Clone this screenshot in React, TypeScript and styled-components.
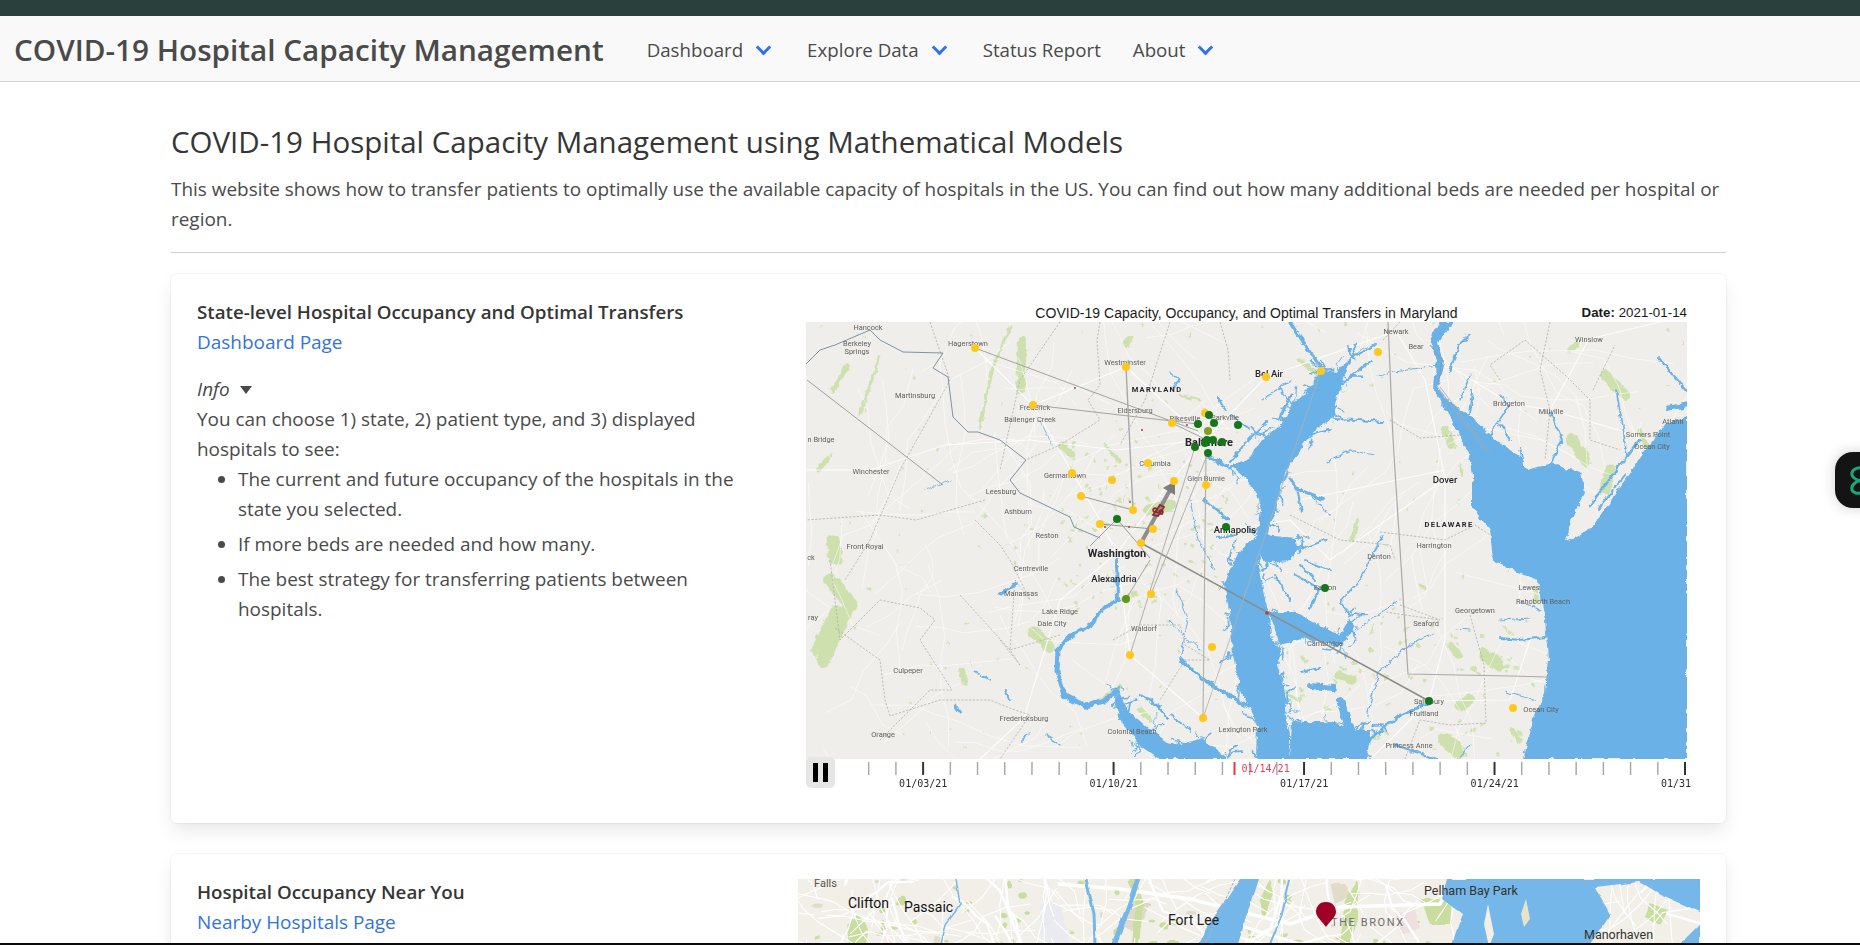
import React from "react";
import styled, { createGlobalStyle } from "styled-components";

/* ---------- deterministic map helpers ---------- */
const makeRng = (seed: number) => () => {
  seed = (seed * 1664525 + 1013904223) % 4294967296;
  return seed / 4294967296;
};

type Stroke = [string, number];

const randomRoads = (seed: number, count: number, x0: number, y0: number, w: number, h: number, step: number) => {
  const r = makeRng(seed);
  const out: string[] = [];
  for (let i = 0; i < count; i++) {
    let x = x0 + r() * w;
    let y = y0 + r() * h;
    let a = r() * Math.PI * 2;
    let d = `M${x.toFixed(1)},${y.toFixed(1)}`;
    const n = 3 + Math.floor(r() * 5);
    for (let j = 0; j < n; j++) {
      a += (r() - 0.5) * 0.9;
      x += Math.cos(a) * step * (0.6 + r());
      y += Math.sin(a) * step * (0.6 + r());
      d += `L${x.toFixed(1)},${y.toFixed(1)}`;
    }
    out.push(d);
  }
  return out;
};

const randomPatches = (seed: number, count: number, x0: number, y0: number, w: number, h: number, size: number) => {
  const r = makeRng(seed);
  const out: { x: number; y: number; rx: number; ry: number; rot: number }[] = [];
  for (let i = 0; i < count; i++) {
    out.push({
      x: x0 + r() * w,
      y: y0 + r() * h,
      rx: size * (0.4 + r()),
      ry: size * (0.3 + r() * 0.6),
      rot: r() * 180,
    });
  }
  return out;
};

/* ---------- Maryland map data, in page coordinates ---------- */
const BAY_POLYGONS = [
  // Delaware Bay and the Atlantic
  "M1440,322 L1430,340 L1436,360 L1434,390 L1455,427 L1469,453 L1472,477 L1472,507 L1490,530 L1493,560 L1520,573 L1538,580 L1545,620 L1548,660 L1545,693 L1533,720 L1522,759 L1687,759 L1687,417 L1666,423 L1643,453 L1620,487 L1593,527 L1566,542 L1572,517 L1585,493 L1581,473 L1551,463 L1528,470 L1520,457 L1490,435 L1469,415 L1447,400 L1438,388 L1444,360 L1438,343 L1447,330 L1453,322 Z",
  // Chesapeake Bay
  "M1322,369 L1313,385 L1300,398 L1293,402 L1285,420 L1262,440 L1250,459 L1232,466 L1247,479 L1255,490 L1261,509 L1258,535 L1240,550 L1233,562 L1224,585 L1230,615 L1233,655 L1240,689 L1257,722 L1256,759 L1290,759 L1290,735 L1284,712 L1286,700 L1283,685 L1277,665 L1280,650 L1272,640 L1268,612 L1262,585 L1257,562 L1265,545 L1270,525 L1276,510 L1278,495 L1282,482 L1287,469 L1310,435 L1335,415 L1335,405 L1343,379 L1353,357 L1335,372 Z",
  // Eastern Bay / Miles River
  "M1263,535 L1297,538 L1298,550 L1290,560 L1270,562 L1260,558 Z",
  // Choptank mouth
  "M1268,612 L1296,612 L1325,628 L1340,636 L1350,618 L1354,628 L1340,646 L1305,638 L1280,645 Z",
  // Lower Potomac
  "M1118,690 L1128,710 L1150,730 L1168,742 L1180,745 L1202,738 L1225,757 L1225,759 L1160,759 L1140,745 L1122,722 L1115,705 Z",
  // Tangier Sound
  "M1292,722 L1330,722 L1358,730 L1372,730 L1366,759 L1290,759 Z",
];

/* Small creeks that branch off the shores of the Chesapeake and its rivers */
const coastCreeks = (seed: number): Stroke[] => {
  const r = makeRng(seed);
  const out: Stroke[] = [];
  BAY_POLYGONS.forEach((poly, index) => {
    if (index === 0) return;
    const pts = (poly.match(/\d+,\d+/g) || []).map((p) => p.split(",").map(Number));
    pts.forEach(([x, y]) => {
      for (let k = 0; k < 3; k++) {
        const a = r() * Math.PI * 2;
        const len = 6 + r() * 12;
        const bx = x + (r() - 0.5) * 8;
        const by = y + (r() - 0.5) * 8;
        const mx = bx + Math.cos(a) * len * 0.5;
        const my = by + Math.sin(a) * len * 0.5;
        const ex = mx + Math.cos(a + 0.7) * len * 0.5;
        const ey = my + Math.sin(a + 0.7) * len * 0.5;
        out.push([`M${bx.toFixed(1)},${by.toFixed(1)} L${mx.toFixed(1)},${my.toFixed(1)} L${ex.toFixed(1)},${ey.toFixed(1)}`, 0.8 + r() * 1.1]);
      }
    });
  });
  return out;
};

const RIVERS: Stroke[] = [
  ...coastCreeks(17),
  ["M1117,560 L1118,600", 4],
  ["M1118,600 L1100,610 L1093,623 L1070,637", 4],
  ["M1070,637 L1058,650 L1057,672 L1064,695 L1085,706 L1102,702 L1116,692", 5],
  ["M1353,357 L1375,345", 2],
  ["M1377,375 L1437,365", 1.1],
  ["M1322,369 L1305,345 L1290,322", 3],
  ["M1340,385 L1372,360", 2],
  ["M1228,466 L1208,456", 3.5],
  ["M1228,520 L1205,500", 2.5],
  ["M1236,534 L1218,538", 2],
  ["M1180,659 L1203,679 L1223,692 L1257,712", 3.5],
  ["M1180,659 L1188,620 L1176,590", 1],
  ["M1140,695 L1160,706", 2.5],
  ["M1168,718 L1152,700", 2.5],
  ["M1190,730 L1170,715", 2],
  ["M1323,499 L1297,489 L1290,478", 3],
  ["M1297,489 L1302,512", 2],
  ["M1310,495 L1330,515", 1.2],
  ["M1327,462 L1350,450 L1373,455", 1.2],
  ["M1333,419 L1358,420 L1383,422", 2],
  ["M1330,430 L1310,435", 2],
  ["M1230,462 L1248,440 L1267,422", 2],
  ["M1280,418 L1290,395", 3],
  ["M1250,430 L1230,415", 2],
  ["M1262,400 L1290,380", 1.2],
  ["M1350,615 L1340,602 L1360,579 L1383,535", 1.6],
  ["M1356,630 L1378,615 L1400,600", 1],
  ["M1296,575 L1320,590 L1310,610", 2.5],
  ["M1290,600 L1275,575", 2],
  ["M1300,565 L1315,580", 2],
  ["M1325,540 L1300,550", 2],
  ["M1330,570 L1305,560", 2],
  ["M1260,590 L1262,600", 1.5],
  ["M1433,633 L1407,647 L1380,670 L1373,693 L1367,716", 1.2],
  ["M1429,703 L1400,715 L1370,740", 2.5],
  ["M1310,686 L1334,688", 6],
  ["M1340,700 L1350,730", 8],
  ["M1300,672 L1320,668", 2],
  ["M1395,745 L1440,760", 2],
  ["M1460,759 L1470,745", 1.2],
  ["M1546,637 L1520,640 L1500,638", 2],
  ["M1500,620 L1530,618", 1.2],
  ["M1540,610 L1520,600", 1.2],
  ["M1536,700 L1505,692", 1.2],
  ["M1456,628 L1470,630", 1],
  ["M1450,372 L1458,345 L1470,335", 2],
  ["M1460,400 L1470,376", 1.2],
  ["M1469,415 L1472,390", 2],
  ["M1490,435 L1510,405 L1500,395", 1.6],
  ["M1524,470 L1520,448", 2],
  ["M1551,463 L1562,440 L1551,413", 2],
  ["M1510,440 L1500,425", 2],
  ["M1627,456 L1622,420 L1616,390", 1.6],
  ["M1687,391 L1658,357", 2],
  ["M1687,405 L1668,408", 5],
  ["M1590,505 L1640,440", 2.5],
  ["M1598,510 L1625,475", 2],
  ["M1190,500 L1198,540 L1215,570", 1],
  ["M1168,620 L1200,650", 1],
  ["M1040,420 L1052,445", 0.8],
  ["M925,490 L950,480", 0.8],
  ["M1170,372 L1180,380 L1172,388", 1.4],
  ["M1218,396 L1225,410", 2],
  ["M1005,690 L1010,700", 2],
  ["M1045,735 L1060,745", 1.5],
  ["M1020,742 L1030,732", 1.5],
  ["M955,705 L960,712", 3],
  ["M975,672 L990,680", 1.5],
  ["M1015,584 L1000,594", 3],
];

const POTOMAC_BORDER = "M806,364 L820,350 L835,345 L870,330 L880,340 L903,352 L943,353 L933,368 L948,377 L953,417 L968,432 L978,432 L1000,440 L1026,460 L1010,480 L1020,493 L1070,517 L1074,527 L1100,538";

const GREEN_STRIPS: Stroke[] = [
  ["M1010,327 L993,367 L980,427", 3],
  ["M1022,340 L1020,390", 8],
  ["M847,367 L833,390", 5],
  ["M880,357 L860,413", 3],
  ["M830,580 L850,603 L823,660", 14],
  ["M836,610 L815,650", 10],
  ["M1033,632 L1050,647", 11],
  ["M962,670 L964,682", 6],
  ["M833,540 L836,560", 13],
  ["M828,458 L818,470", 5],
  ["M1060,445 L1072,453", 7],
  ["M1105,445 L1120,462", 3],
  ["M1130,338 L1126,345", 6],
  ["M1148,510 L1170,505", 11],
  ["M1180,395 L1200,400", 3],
  ["M1420,585 L1425,590", 3],
  ["M1358,520 L1352,540", 4],
  ["M1445,430 L1452,445", 8],
  ["M1460,465 L1462,475", 3],
  ["M1572,440 L1585,460", 12],
  ["M1605,375 L1625,395", 10],
  ["M1610,470 L1605,490", 11],
  ["M1640,430 L1650,455", 5],
  ["M1535,590 L1537,600", 5],
  ["M1325,380 L1300,360", 5],
  ["M1450,645 L1458,655", 7],
  ["M1485,655 L1498,665", 13],
  ["M1340,675 L1352,680", 9],
  ["M1460,705 L1470,700", 11],
  ["M1445,740 L1460,752", 14],
  ["M1347,722 L1354,737", 8],
  ["M1280,690 L1300,700", 4],
  ["M1123,600 L1135,594", 5],
  ["M1140,710 L1150,720", 5],
  ["M1120,687 L1100,700", 5],
  ["M1512,730 L1520,740", 5],
  ["M1570,350 L1576,345", 7],
];

const MD_ROADS = [
  ...randomRoads(11, 150, 806, 322, 881, 437, 26),
  "M806,470 L870,470 L945,445 L1030,440 L1117,450 L1200,440",
  "M975,348 L1033,405 L1100,520 L1117,553",
  "M1033,405 L1126,367 L1205,440",
  "M1117,553 L1160,495 L1205,440 L1266,377 L1396,331",
  "M1117,553 L1130,655 L1203,718",
  "M1117,553 L1060,600 L1024,718 L980,759",
  "M1429,701 L1445,640 L1445,479 L1425,380 L1396,331",
  "M1429,701 L1510,700 L1530,640",
  "M1445,479 L1330,560 L1290,520",
  "M1300,500 L1445,470",
  "M1550,410 L1509,403 L1440,360",
  "M1550,410 L1589,339 L1660,322",
  "M1550,410 L1652,440",
  "M1429,701 L1390,740 L1370,759",
  "M1235,529 L1290,520",
];

const COUNTY_LINES = [
  "M930,322 L950,380 L900,470 L870,540 L845,580",
  "M1060,322 L1020,380 L1000,470",
  "M1100,322 L1097,340 L1100,385 L1088,400 L1100,420 L1060,445 L1026,460",
  "M1170,322 L1145,400 L1120,445",
  "M1220,322 L1228,350 L1230,380",
  "M985,500 L916,520 L880,515 L806,520",
  "M975,520 L1000,545 L1010,560 L1030,600 L1015,580 L1010,650 L1060,635",
  "M960,595 L1010,650 L1020,665",
  "M830,560 L840,640 L880,600 L920,608 L935,620 L920,640 L952,690 L930,690 L880,740",
  "M835,628 L880,660 L885,700 L890,716 L940,700 L990,700 L1015,710 L1030,715 L1000,759",
  "M1020,665 L1000,640",
  "M1113,640 L1140,625 L1180,625 L1185,645 L1210,660 L1185,660 L1160,700",
  "M1380,532 L1445,540 L1475,525 L1490,535",
  "M1390,420 L1420,438 L1460,435",
  "M1500,380 L1490,365 L1525,340 L1565,375 L1590,400 L1590,440 L1620,450",
  "M1550,322 L1540,370 L1550,410 L1545,460",
  "M1593,390 L1615,345",
  "M1400,605 L1440,620 L1385,612",
  "M1383,340 L1400,322",
  "M1470,615 L1484,665 L1486,723 L1450,725 L1420,720 L1405,759",
  "M1290,515 L1340,540 L1390,545 L1395,560",
];

type Kind = "minor" | "city" | "big" | "state";
const MD_LABELS: [string, number, number, Kind][] = [
  ["Hancock", 868, 327, "minor"], ["Berkeley", 857, 343, "minor"], ["Springs", 857, 351, "minor"],
  ["Hagerstown", 968, 343, "minor"], ["Westminster", 1125, 362, "minor"], ["MARYLAND", 1157, 389, "state"],
  ["Bel Air", 1269, 373, "city"], ["Martinsburg", 915, 395, "minor"], ["Frederick", 1035, 407, "minor"],
  ["Ballenger Creek", 1030, 419, "minor"], ["Eldersburg", 1135, 410, "minor"], ["Pikesville", 1185, 418, "minor"],
  ["Parkville", 1225, 417, "minor"], ["n Bridge", 821, 439, "minor"], ["Baltimore", 1209, 442, "big"],
  ["Columbia", 1155, 463, "minor"], ["Germantown", 1065, 475, "minor"], ["Glen Burnie", 1206, 478, "minor"],
  ["Winchester", 871, 471, "minor"], ["Leesburg", 1001, 491, "minor"], ["Ashburn", 1018, 511, "minor"],
  ["Annapolis", 1235, 529, "city"], ["Reston", 1047, 535, "minor"], ["Front Royal", 865, 546, "minor"],
  ["Washington", 1117, 553, "big"], ["Centreville", 1031, 568, "minor"], ["ck", 811, 557, "minor"],
  ["Alexandria", 1114, 578, "city"], ["Manassas", 1021, 593, "minor"], ["Lake Ridge", 1060, 611, "minor"],
  ["Dale City", 1052, 623, "minor"], ["Waldorf", 1144, 628, "minor"], ["ray", 813, 617, "minor"],
  ["Culpeper", 908, 670, "minor"], ["Fredericksburg", 1024, 718, "minor"], ["Orange", 883, 734, "minor"],
  ["Colonial Beach", 1132, 731, "minor"], ["Lexington Park", 1243, 729, "minor"], ["Newark", 1396, 331, "minor"],
  ["Bear", 1416, 346, "minor"], ["Winslow", 1589, 339, "minor"], ["Bridgeton", 1509, 403, "minor"],
  ["Millville", 1551, 411, "minor"], ["Atlanti", 1673, 421, "minor"], ["Somers Point", 1648, 434, "minor"],
  ["Ocean City", 1652, 446, "minor"], ["Dover", 1445, 479, "city"], ["DELAWARE", 1449, 524, "state"],
  ["Harrington", 1434, 545, "minor"], ["Denton", 1379, 556, "minor"], ["Easton", 1325, 587, "minor"],
  ["Lewes", 1529, 587, "minor"], ["Rehoboth Beach", 1543, 601, "minor"], ["Georgetown", 1475, 610, "minor"],
  ["Seaford", 1426, 623, "minor"], ["Cambridge", 1325, 643, "minor"], ["Salisbury", 1429, 701, "minor"],
  ["Fruitland", 1424, 713, "minor"], ["Ocean City", 1541, 709, "minor"], ["Princess Anne", 1409, 745, "minor"],
];

const YELLOW = "#fdc81e";
const GREEN = "#14761a";
const HOSPITALS: [number, number, string][] = [
  [975, 348, YELLOW], [1126, 367, YELLOW], [1266, 377, YELLOW], [1033, 405, YELLOW], [1172, 423, YELLOW],
  [1205, 413, YELLOW], [1148, 463, YELLOW], [1072, 473, YELLOW], [1112, 480, YELLOW], [1174, 481, YELLOW],
  [1206, 485, YELLOW], [1081, 496, YELLOW], [1133, 510, YELLOW], [1100, 524, YELLOW], [1153, 529, YELLOW],
  [1141, 543, YELLOW], [1151, 594, YELLOW], [1130, 655, YELLOW], [1212, 647, YELLOW], [1203, 718, YELLOW],
  [1378, 352, YELLOW], [1321, 371, YELLOW], [1513, 708, YELLOW],
  [1209, 415, GREEN], [1198, 424, GREEN], [1214, 423, GREEN], [1238, 425, GREEN], [1208, 431, "#7f9f24"],
  [1207, 440, GREEN], [1213, 440, GREEN], [1222, 442, GREEN], [1195, 447, GREEN], [1208, 453, GREEN],
  [1205, 443, GREEN], [1117, 519, GREEN], [1226, 527, GREEN], [1126, 599, "#5f9612"], [1325, 588, GREEN], [1429, 701, GREEN],
];

const TRANSFERS: [string, number, string][] = [
  ["M975,348 L1120,402 L1198,431", 0.9, "#9a9a97"],
  ["M1033,405 L1198,424", 0.9, "#9a9a97"],
  ["M1126,367 L1133,510", 1.4, "#a8a8a5"],
  ["M1081,496 L1133,510", 0.9, "#8f8f8c"],
  ["M1100,524 L1153,529", 0.9, "#8f8f8c"],
  ["M1141,543 L1429,701", 1.5, "#8c8c89"],
  ["M1203,718 L1206,453", 1.1, "#afafac"],
  ["M1203,718 L1321,371", 0.8, "#b0b0ad"],
  ["M1130,655 L1195,447", 1, "#afafac"],
  ["M1151,594 L1208,453", 1, "#afafac"],
  ["M1117,519 L1090,546", 0.9, "#9a9a97"],
  ["M1117,519 L1150,558", 0.9, "#9a9a97"],
  ["M1126,599 L1150,560", 0.9, "#9a9a97"],
  ["M1172,423 L1207,440", 0.9, "#9a9a97"],
];

const RED_MARKS: [number, number][] = [[1075, 388], [1142, 430], [1130, 502], [1105, 527], [1129, 527], [1187, 425], [1267, 613]];

/* ---------- timeline data ---------- */
const MINOR_TICKS = Array.from({ length: 31 }, (_, i) => 868.7 + i * 27.21);
const isMajor = (i: number) => (i + 5) % 7 === 0 && i >= 2;
const DATES: [string, number][] = [["01/03/21", 923.2], ["01/10/21", 1113.7], ["01/17/21", 1304.2], ["01/24/21", 1494.7]];

/* ---------- New York map data ---------- */
const NY_ROADS = randomRoads(29, 170, 798, 870, 900, 85, 18);
const NY_PATCHES = randomPatches(41, 70, 798, 880, 800, 65, 4);
const MD_PATCH_GROUPS = [
  randomPatches(3, 170, 806, 322, 881, 437, 1.7),
  randomPatches(5, 110, 1060, 440, 170, 170, 2.2),
  randomPatches(7, 60, 1280, 600, 260, 159, 3),
];

/* ---------- styled parts ---------- */
const GlobalStyle = createGlobalStyle`
  html, body { margin: 0; padding: 0; height: 100%; background: #fff; overflow: hidden; }
  body {
    font-family: "Open Sans", "Noto Sans", sans-serif;
    color: #4a4a4a;
  }
  * { box-sizing: border-box; }
`;

const Screen = styled.div`
  position: relative;
  width: 1860px;
  height: 945px;
  overflow: hidden;
  background: #fff;
`;

const TopStrip = styled.div`
  height: 16px;
  background: #2a403d;
`;

const NavBar = styled.nav`
  display: flex;
  align-items: center;
  height: 66px;
  padding: 2px 0 0 14px;
  gap: 43px;
  background: #f9f9f9;
  border-bottom: 1px solid #d4d4d4;
`;

const Brand = styled.a`
  font-size: 29.7px;
  font-weight: 600;
  color: #4a4a4a;
  white-space: nowrap;
`;

const NavMenu = styled.div`
  display: flex;
  align-items: center;
  gap: 32px;
`;

const NavItem = styled.a`
  display: flex;
  align-items: center;
  gap: 15px;
  font-size: 18.7px;
  color: #4a4a4a;
  white-space: nowrap;
`;

const Chevron = styled.span`
  display: block;
  width: 11px;
  height: 11px;
  margin: -5px 6px 0 0;
  border-left: 3px solid #3273dc;
  border-bottom: 3px solid #3273dc;
  transform: rotate(-45deg);
`;

const Main = styled.main`
  padding: 40px 134px 0 171px;
`;

const Heading = styled.h1`
  margin: 0;
  font-size: 29.5px;
  line-height: 40px;
  font-weight: 500;
  color: #363636;
`;

const Lead = styled.p`
  margin: 12px 0 0;
  font-size: 18.95px;
  line-height: 30.4px;
`;

const Rule = styled.hr`
  margin: 17px 0 21px;
  border: 0;
  height: 1px;
  background: #cfcfcf;
`;

const Card = styled.section`
  display: grid;
  grid-template-columns: 601px 902px;
  padding: 23px 26px 25px;
  margin-bottom: 31px;
  background: #fff;
  border-radius: 6px;
  box-shadow: 0 9px 18px -2px rgba(10, 10, 10, 0.1), 0 0 0 1px rgba(10, 10, 10, 0.03);
`;

const TextColumn = styled.div`
  font-size: 18.95px;
  line-height: 30px;
`;

const CardTitle = styled.div`
  font-weight: 600;
  font-size: 18.75px;
  color: #363636;
`;

const CardLink = styled.a`
  display: block;
  color: #3273dc;
`;

const InfoToggle = styled.div`
  display: flex;
  align-items: center;
  gap: 10px;
  margin-top: 17px;
  font-style: italic;
`;

const Caret = styled.span`
  width: 0;
  height: 0;
  border-left: 6.5px solid transparent;
  border-right: 6.5px solid transparent;
  border-top: 8px solid #4a4a4a;
  margin-top: 3px;
`;

const BulletList = styled.ul`
  margin: 0;
  padding: 0 0 0 41px;
  max-width: 551px;
`;

const Bullet = styled.li`
  & + & {
    margin-top: 5px;
  }
`;

const Figure = styled.figure`
  margin: 4px 0 0 8px;
  width: 881px;
`;

const FigureHead = styled.div`
  display: grid;
  grid-template-columns: 1fr auto 1fr;
  align-items: center;
  height: 21px;
  padding-top: 3px;
  font-family: "Liberation Sans", Arial, sans-serif;
  font-size: 14px;
  letter-spacing: 0.03px;
  color: #1a1a1a;
`;

const FigureDate = styled.div`
  justify-self: end;
  font-size: 13.3px;
  & b {
    font-weight: 700;
  }
`;

const MapCanvas = styled.svg`
  display: block;
  width: 881px;
  height: 437px;
  background: #f0eeea;
`;

const MapLabel = styled.text<{ $kind: Kind }>`
  font-family: Roboto, "Liberation Sans", sans-serif;
  text-anchor: middle;
  dominant-baseline: central;
  font-size: ${(p) => (p.$kind === "big" ? "11px" : p.$kind === "city" ? "9.5px" : p.$kind === "state" ? "7.5px" : "7.4px")};
  font-weight: ${(p) => (p.$kind === "big" || p.$kind === "state" ? 700 : p.$kind === "city" ? 500 : 400)};
  letter-spacing: ${(p) => (p.$kind === "state" ? "1.3px" : "0")};
  fill: ${(p) => (p.$kind === "minor" ? "#5f5f5c" : "#26262a")};
`;

const Timeline = styled.div`
  position: relative;
  height: 39px;
`;

const TimelineAxis = styled.svg`
  display: block;
  width: 887px;
  height: 39px;
  overflow: hidden;
`;

const TickLabel = styled.text<{ $active?: boolean; $start?: boolean }>`
  font-family: "DejaVu Sans Mono", "Liberation Mono", monospace;
  font-size: 10px;
  text-anchor: ${(p) => (p.$active || p.$start ? "start" : "middle")};
  dominant-baseline: central;
  fill: ${(p) => (p.$active ? "#ef3a4c" : "#2b2b2b")};
`;

const PauseButton = styled.button`
  position: absolute;
  left: 0;
  top: -2px;
  display: flex;
  align-items: center;
  justify-content: center;
  gap: 5px;
  width: 29px;
  height: 31px;
  padding: 0;
  border: 0;
  border-radius: 5px;
  background: #e6e6e6;
`;

const PauseBar = styled.span`
  width: 5px;
  height: 19px;
  background: #000;
`;

const NearbyMap = styled.svg`
  display: block;
  width: 902px;
  height: 90px;
  margin-top: 2px;
  background: #f2efe9;
`;

const NearbyLabel = styled.text<{ $size: number; $tone: string; $spaced?: boolean }>`
  font-family: Roboto, "Liberation Sans", sans-serif;
  font-size: ${(p) => p.$size}px;
  letter-spacing: ${(p) => (p.$spaced ? "1.6px" : "0")};
  dominant-baseline: central;
  fill: ${(p) => p.$tone};
`;

const ScreenEdge = styled.div`
  position: absolute;
  left: 0;
  right: 0;
  bottom: 0;
  height: 2px;
  background: #0b0b0b;
`;

const FloatingBadge = styled.div`
  position: absolute;
  left: 1835px;
  top: 452px;
  width: 60px;
  height: 56px;
  padding: 14px 0 0 15px;
  border-radius: 18px;
  background: #141414;
  box-shadow: 0 0 14px rgba(0, 0, 0, 0.18);
`;

/* ---------- drawings ---------- */
const MarylandMap = () => (
  <MapCanvas viewBox="806 322 881 437" role="img" aria-label="Map of Maryland">
    <defs>
      <filter id="coast" x="-5%" y="-5%" width="110%" height="110%">
        <feTurbulence type="fractalNoise" baseFrequency="0.13" numOctaves="3" seed="4" />
        <feDisplacementMap in="SourceGraphic" scale="6" xChannelSelector="R" yChannelSelector="G" />
        <feGaussianBlur stdDeviation="0.3" />
      </filter>
      <filter id="soft" x="-5%" y="-5%" width="110%" height="110%">
        <feGaussianBlur stdDeviation="0.35" />
      </filter>
      <clipPath id="mdClip">
        <rect x="806" y="322" width="881" height="437" />
      </clipPath>
    </defs>
    <g clipPath="url(#mdClip)">
      <g filter="url(#coast)">
        {MD_PATCH_GROUPS.flat().map((p, i) => (
          <ellipse key={i} cx={p.x} cy={p.y} rx={p.rx} ry={p.ry} fill="#d0e2b2" transform={`rotate(${p.rot.toFixed(0)} ${p.x.toFixed(1)} ${p.y.toFixed(1)})`} />
        ))}
        {GREEN_STRIPS.map(([d, w], i) => (
          <path key={i} d={d} fill="none" stroke="#cde0ae" strokeWidth={w} strokeLinecap="round" />
        ))}
      </g>
      <g filter="url(#soft)" fill="none">
        {MD_ROADS.map((d, i) => (
          <path key={i} d={d} stroke="#fff" strokeWidth={i >= 150 ? 1.2 : 0.8} strokeOpacity={i >= 150 ? 0.85 : 0.7} />
        ))}
        {COUNTY_LINES.map((d, i) => (
          <path key={i} d={d} stroke="#aeaea9" strokeWidth="0.8" strokeDasharray="2.2 1.6" />
        ))}
      </g>
      <g filter="url(#coast)">
        {BAY_POLYGONS.map((d, i) => (
          <path key={i} d={d} fill="#6bb1e8" />
        ))}
        <g fill="none" stroke="#6bb1e8" strokeLinecap="round">
          {RIVERS.map(([d, w], i) => (
            <path key={i} d={d} strokeWidth={w} />
          ))}
        </g>
      </g>
      <g filter="url(#soft)" fill="none">
        <path d={POTOMAC_BORDER} stroke="#7d92a2" strokeWidth="1" />
        <path d="M807,380 L943,485" stroke="#a09f9a" strokeWidth="1" />
        <path d="M1388,322 L1393,439 L1408,674 L1510,676 L1548,677" stroke="#aaa9a5" strokeWidth="1.2" />
        <path d="M1440,387 L1490,452 M1437,386 L1487,453" stroke="#a3aab0" strokeWidth="0.8" />
        <path d="M1430,345 L1442,360 L1438,385" stroke="#8f9aa3" strokeWidth="1" />
      </g>
      <g filter="url(#soft)">
        {MD_LABELS.map(([t, x, y, k], i) => (
          <MapLabel key={i} x={x} y={y} $kind={k}>{t}</MapLabel>
        ))}
        {TRANSFERS.map(([d, w, c], i) => (
          <path key={i} d={d} fill="none" stroke={c} strokeWidth={w} />
        ))}
        {RED_MARKS.map(([x, y], i) => (
          <circle key={i} cx={x} cy={y} r={i === 6 ? 1.8 : 1} fill="#a8404a" />
        ))}
        <path d="M1141,543 L1170,490" fill="none" stroke="#8e8e8e" strokeWidth="4" />
        <path d="M1175,481 L1163,488 L1175,495 Z" fill="#7d7d7d" />
        {HOSPITALS.map(([x, y, c], i) => (
          <circle key={i} cx={x} cy={y} r="4" fill={c} />
        ))}
        <g fill="none" stroke="#8f2a2c" strokeWidth="1.8">
          <path d="M1153,515 L1160,505 L1164,507 L1158,516 Z M1156,512 L1163,514" />
          <circle cx="1155" cy="510" r="1.8" />
          <circle cx="1161" cy="512" r="1.8" />
        </g>
      </g>
    </g>
  </MapCanvas>
);

const TimelineBar = () => (
  <Timeline>
    <TimelineAxis viewBox="806 760 887 39">
      {MINOR_TICKS.map((x, i) => {
        const major = isMajor(i);
        return (
          <line key={i} x1={x} x2={x} y1="763" y2="776" stroke={major ? "#333" : "#aaa"} strokeWidth={major ? 2 : 1.5} />
        );
      })}
      <line x1="1234.5" x2="1234.5" y1="763" y2="776" stroke="#f0303f" strokeWidth="2" />
      <TickLabel x="1241.5" y="769.5" $active>01/14/21</TickLabel>
      {DATES.map(([t, x]) => (
        <TickLabel key={t} x={x} y="784.5">{t}</TickLabel>
      ))}
      <TickLabel x="1661" y="784.5" $start>01/31</TickLabel>
    </TimelineAxis>
    <PauseButton aria-label="Pause">
      <PauseBar />
      <PauseBar />
    </PauseButton>
  </Timeline>
);

const NearbyHospitalsMap = () => (
  <NearbyMap viewBox="798 880 902 90" role="img" aria-label="Map of nearby hospitals">
    <defs>
      <filter id="nyCoast" x="-5%" y="-20%" width="110%" height="140%">
        <feTurbulence type="fractalNoise" baseFrequency="0.06" numOctaves="2" seed="9" />
        <feDisplacementMap in="SourceGraphic" scale="4" xChannelSelector="R" yChannelSelector="G" />
      </filter>
    </defs>
    <g filter="url(#nyCoast)">
      {NY_PATCHES.map((p, i) => (
        <ellipse key={i} cx={p.x} cy={p.y} rx={p.rx} ry={p.ry} fill={i % 5 === 0 ? "#e0dcc8" : "#c9dd9f"} />
      ))}
      <path d="M846,925 L858,915 L868,930 L866,950 L850,950 Z" fill="#c9dd9f" />
      <path d="M1130,900 L1120,925 L1138,935 L1150,905 Z" fill="#dedac8" />
      <path d="M1330,885 L1345,885 L1352,895 L1335,905 Z" fill="#e0dcc8" />
      <path d="M1345,900 L1358,880 L1358,920 L1350,945 L1340,945 Z" fill="#c9dd9f" />
      <path d="M1260,900 L1270,880 L1274,895 L1264,920 Z" fill="#c9dd9f" />
      <path d="M1420,900 L1452,900 L1450,925 L1430,925 Z" fill="#c9dd9f" />
      <path d="M1040,905 L1060,905 L1070,945 L1040,945 Z" fill="#e9ebf0" />
      <path d="M1395,915 L1415,910 L1420,930 L1400,935 Z" fill="#f0dfdf" />
      <path d="M1131,880 L1140,905 L1136,945" fill="none" stroke="#c9dd9f" strokeWidth="8" />
      <path d="M1650,905 L1668,912 L1660,925 L1645,918 Z" fill="#c9dd9f" />
    </g>
    <g fill="none" stroke="#fff">
      {NY_ROADS.map((d, i) => (
        <path key={i} d={d} strokeWidth={i % 9 === 0 ? 2.4 : 1.1} />
      ))}
      <path d="M1058,885 L1120,890 L1190,900 L1290,925 L1340,908 L1440,905 L1450,885" strokeWidth="3.5" />
      <path d="M1225,922 L1300,945" strokeWidth="3" />
    </g>
    <g filter="url(#nyCoast)">
      <path d="M1240,880 L1258,880 L1250,905 L1238,945 L1198,945 L1216,915 Z" fill="#76b7ea" />
      <path d="M1447,880 L1700,880 L1700,913 L1660,895 L1640,883 L1595,888 L1610,915 L1590,945 L1452,945 L1462,915 L1442,900 Z" fill="#76b7ea" />
      <path d="M1700,925 L1680,945 L1700,945 Z" fill="#76b7ea" />
      <g fill="none" stroke="#76b7ea">
        <path d="M1086,880 L1094,915 L1095,945" strokeWidth="3" />
        <path d="M1138,880 L1128,910 L1114,945" strokeWidth="5" />
        <path d="M956,880 L960,905 L945,925 L940,945" strokeWidth="1.5" />
        <path d="M1290,880 L1282,915 L1270,945" strokeWidth="2" />
      </g>
    </g>
    <path d="M1235,880 L1205,945" fill="none" stroke="#a8b4bd" strokeWidth="1" strokeDasharray="3 1.5" />
    <path d="M1488,905 L1494,935 L1489,948 L1484,925 Z" fill="#f2efe9" />
    <path d="M1526,900 L1530,920 L1524,928 L1521,915 Z" fill="#e8e2c8" />
    <NearbyLabel x={814} y={884} $size={11} $tone="#55554f">Falls</NearbyLabel>
    <NearbyLabel x={848} y={904} $size={14} $tone="#111">Clifton</NearbyLabel>
    <NearbyLabel x={904} y={908} $size={14} $tone="#111">Passaic</NearbyLabel>
    <NearbyLabel x={1168} y={921} $size={14} $tone="#222">Fort Lee</NearbyLabel>
    <NearbyLabel x={1331} y={923} $size={11} $tone="#6d6d6d" $spaced>THE BRONX</NearbyLabel>
    <NearbyLabel x={1424} y={891} $size={12.5} $tone="#33332f">Pelham Bay Park</NearbyLabel>
    <NearbyLabel x={1584} y={935} $size={12.5} $tone="#33332f">Manorhaven</NearbyLabel>
    <path d="M1326,903 C1319,903 1316,908 1316,913 C1316,918 1323,923 1326,928 C1329,923 1336,918 1336,913 C1336,908 1333,903 1326,903 Z" fill="#a00027" />
  </NearbyMap>
);

/* ---------- page ---------- */
export default function App() {
  return (
    <Screen>
      <GlobalStyle />
      <TopStrip />
      <NavBar>
        <Brand>COVID-19 Hospital Capacity Management</Brand>
        <NavMenu>
          <NavItem>Dashboard <Chevron /></NavItem>
          <NavItem>Explore Data <Chevron /></NavItem>
          <NavItem>Status Report</NavItem>
          <NavItem>About <Chevron /></NavItem>
        </NavMenu>
      </NavBar>
      <Main>
        <Heading>COVID-19 Hospital Capacity Management using Mathematical Models</Heading>
        <Lead>
          This website shows how to transfer patients to optimally use the available capacity of hospitals in the US. You can find out how many additional beds are needed per hospital or region.
        </Lead>
        <Rule />
        <Card>
          <TextColumn>
            <CardTitle>State-level Hospital Occupancy and Optimal Transfers</CardTitle>
            <CardLink>Dashboard Page</CardLink>
            <InfoToggle>Info <Caret /></InfoToggle>
            <div>You can choose 1) state, 2) patient type, and 3) displayed<br />hospitals to see:</div>
            <BulletList>
              <Bullet>The current and future occupancy of the hospitals in the state you selected.</Bullet>
              <Bullet>If more beds are needed and how many.</Bullet>
              <Bullet>The best strategy for transferring patients between hospitals.</Bullet>
            </BulletList>
          </TextColumn>
          <Figure>
            <FigureHead>
              <span />
              <div>COVID-19 Capacity, Occupancy, and Optimal Transfers in Maryland</div>
              <FigureDate><b>Date:</b> 2021-01-14</FigureDate>
            </FigureHead>
            <MarylandMap />
            <TimelineBar />
          </Figure>
        </Card>
        <Card>
          <TextColumn>
            <CardTitle>Hospital Occupancy Near You</CardTitle>
            <CardLink>Nearby Hospitals Page</CardLink>
          </TextColumn>
          <NearbyHospitalsMap />
        </Card>
      </Main>
      <FloatingBadge>
        <svg width="24" height="30" viewBox="0 0 24 30" fill="none" stroke="#12a97e" strokeWidth="3" strokeLinecap="round">
          <path d="M14,2 C6,1 1,4 2,9 C3,14 13,15 16,20 C18,25 12,28 6,27 C0,25 1,20 5,17 C9,14 18,10 22,6" />
        </svg>
      </FloatingBadge>
      <ScreenEdge />
    </Screen>
  );
}
